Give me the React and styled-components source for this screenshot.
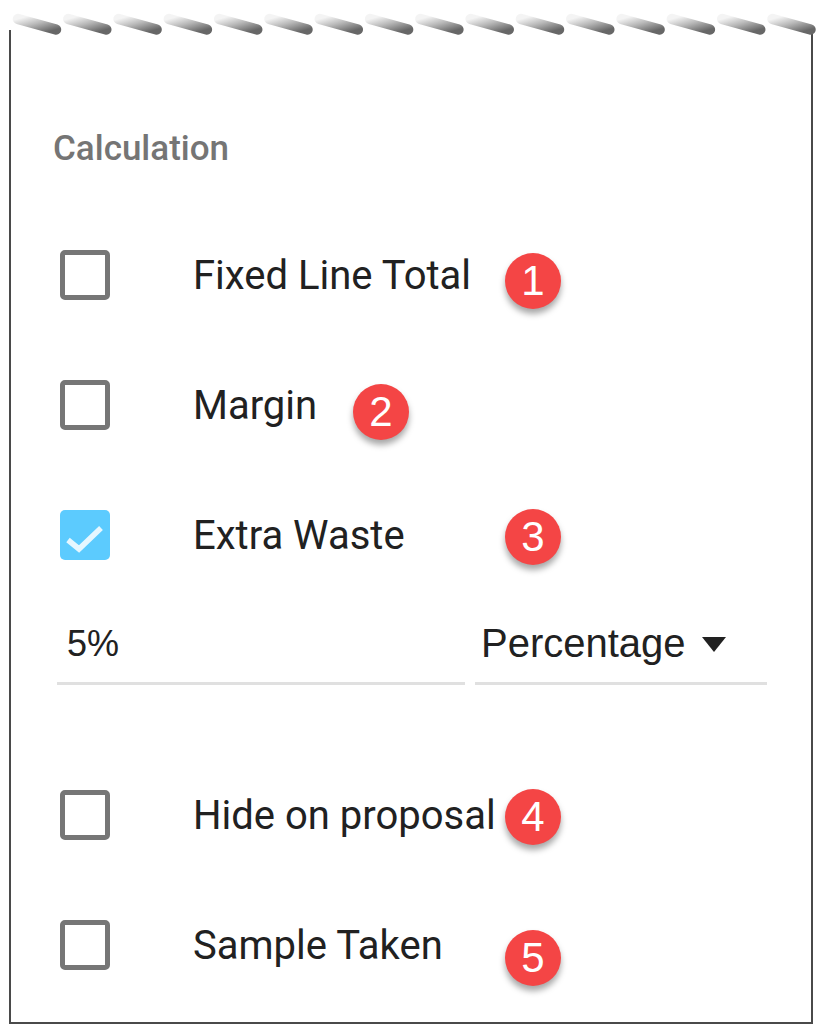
import React from "react";
import styled, { createGlobalStyle } from "styled-components";

const GlobalStyle = createGlobalStyle`
  html, body {
    margin: 0;
    padding: 0;
    background: #ffffff;
  }
  body {
    font-family: Roboto, "Liberation Sans", sans-serif;
  }
`;

const Page = styled.div`
  width: 823px;
  height: 1026px;
  overflow: hidden;
  background: #fff;
`;

const Torn = styled.svg`
  display: block;
  width: 823px;
  height: 36px;
`;

const Sheet = styled.div`
  margin-left: 9px;
  margin-top: -6px;
  width: 804px;
  height: 994px;
  border-left: 2px solid #4a4a4a;
  border-right: 2px solid #4a4a4a;
  border-bottom: 2px solid #4a4a4a;
  padding-top: 99px;
  box-sizing: border-box;
`;

const Title = styled.div`
  margin-left: 42px;
  font-family: Roboto, sans-serif;
  font-weight: 500;
  font-size: 35px;
  line-height: 40px;
  color: #757575;
  margin-bottom: 41px;
`;

const Row = styled.div`
  position: relative;
  height: 130px;
  display: flex;
  align-items: center;
  padding-left: 49px;
`;

const Box = styled.div`
  width: 50px;
  height: 50px;
  box-sizing: border-box;
  border-radius: 5px;
  border: ${(p) => (p.checked ? "none" : "5px solid #767676")};
  background: ${(p) => (p.checked ? "#5ccbfe" : "#fff")};
  display: flex;
  align-items: center;
  justify-content: center;
  flex-shrink: 0;
`;

const Label = styled.span`
  margin-left: 83px;
  font-family: Roboto, sans-serif;
  font-size: 40px;
  color: #212121;
`;

const Badge = styled.div`
  position: absolute;
  left: ${(p) => p.x}px;
  top: calc(50% + ${(p) => p.dy}px);
  transform: translate(-50%, -50%);
  width: 56px;
  height: 56px;
  border-radius: 50%;
  background: #f44545;
  box-shadow: 0 5px 6px rgba(0, 0, 0, 0.35);
  color: #fff;
  font-family: "Liberation Sans", Arial, sans-serif;
  font-size: 42px;
  line-height: 1;
  display: flex;
  align-items: center;
  justify-content: center;
`;

const FieldRow = styled.div`
  display: flex;
  gap: 10px;
  padding-left: 46px;
  margin-bottom: 65px;
`;

const Field = styled.div`
  width: ${(p) => p.w}px;
  height: 85px;
  box-sizing: border-box;
  border-bottom: 3px solid #e0e0e0;
  display: flex;
  align-items: center;
  padding-top: 5px;
  padding-left: ${(p) => p.pl}px;
  font-family: "Liberation Sans", Arial, sans-serif;
  font-size: ${(p) => p.fs}px;
  color: #212121;
`;

const Caret = styled.span`
  margin-left: 16px;
  width: 0;
  height: 0;
  border-left: 12px solid transparent;
  border-right: 12px solid transparent;
  border-top: 15px solid #212121;
  margin-top: 2px;
`;

const Check = () => (
  <svg width="50" height="50" viewBox="0 0 50 50">
    <path d="M8 30 L19 39 L41 18" fill="none" stroke="#e6f7ff" strokeWidth="5.5" />
  </svg>
);

const TornEdge = () => {
  const teeth = Array.from({ length: 16 }, (_, i) => 10 + i * 50.3);
  return (
    <Torn viewBox="0 0 823 36">
      <defs>
        <linearGradient id="tooth" x1="0" y1="0" x2="1" y2="1">
          <stop offset="0" stopColor="#f4f4f4" />
          <stop offset="0.45" stopColor="#bababa" />
          <stop offset="1" stopColor="#676767" />
        </linearGradient>
      </defs>
      {teeth.map((x, i) => (
        <line
          key={i}
          x1={x + 8}
          y1={19}
          x2={x + 46}
          y2={29.5}
          stroke="url(#tooth)"
          strokeWidth="10.5"
          strokeLinecap="round"
        />
      ))}
    </Torn>
  );
};

const items = [
  { label: "Fixed Line Total", n: 1, x: 522, dy: 6 },
  { label: "Margin", n: 2, x: 370, dy: 7 },
  { label: "Extra Waste", n: 3, x: 522, dy: 2, checked: true },
];

const items2 = [
  { label: "Hide on proposal", n: 4, x: 522, dy: 2 },
  { label: "Sample Taken", n: 5, x: 522, dy: 13 },
];

const Item = ({ label, n, x, dy, checked }) => (
  <Row>
    <Box checked={checked}>{checked && <Check />}</Box>
    <Label>{label}</Label>
    <Badge x={x} dy={dy}>{n}</Badge>
  </Row>
);

export default function App() {
  return (
    <Page>
      <GlobalStyle />
      <TornEdge />
      <Sheet>
        <Title>Calculation</Title>
        {items.map((it) => (
          <Item key={it.n} {...it} />
        ))}
        <FieldRow>
          <Field w={408} pl={10} fs={36}>5%</Field>
          <Field w={292} pl={6} fs={40}>
            Percentage
            <Caret />
          </Field>
        </FieldRow>
        {items2.map((it) => (
          <Item key={it.n} {...it} />
        ))}
      </Sheet>
    </Page>
  );
}
